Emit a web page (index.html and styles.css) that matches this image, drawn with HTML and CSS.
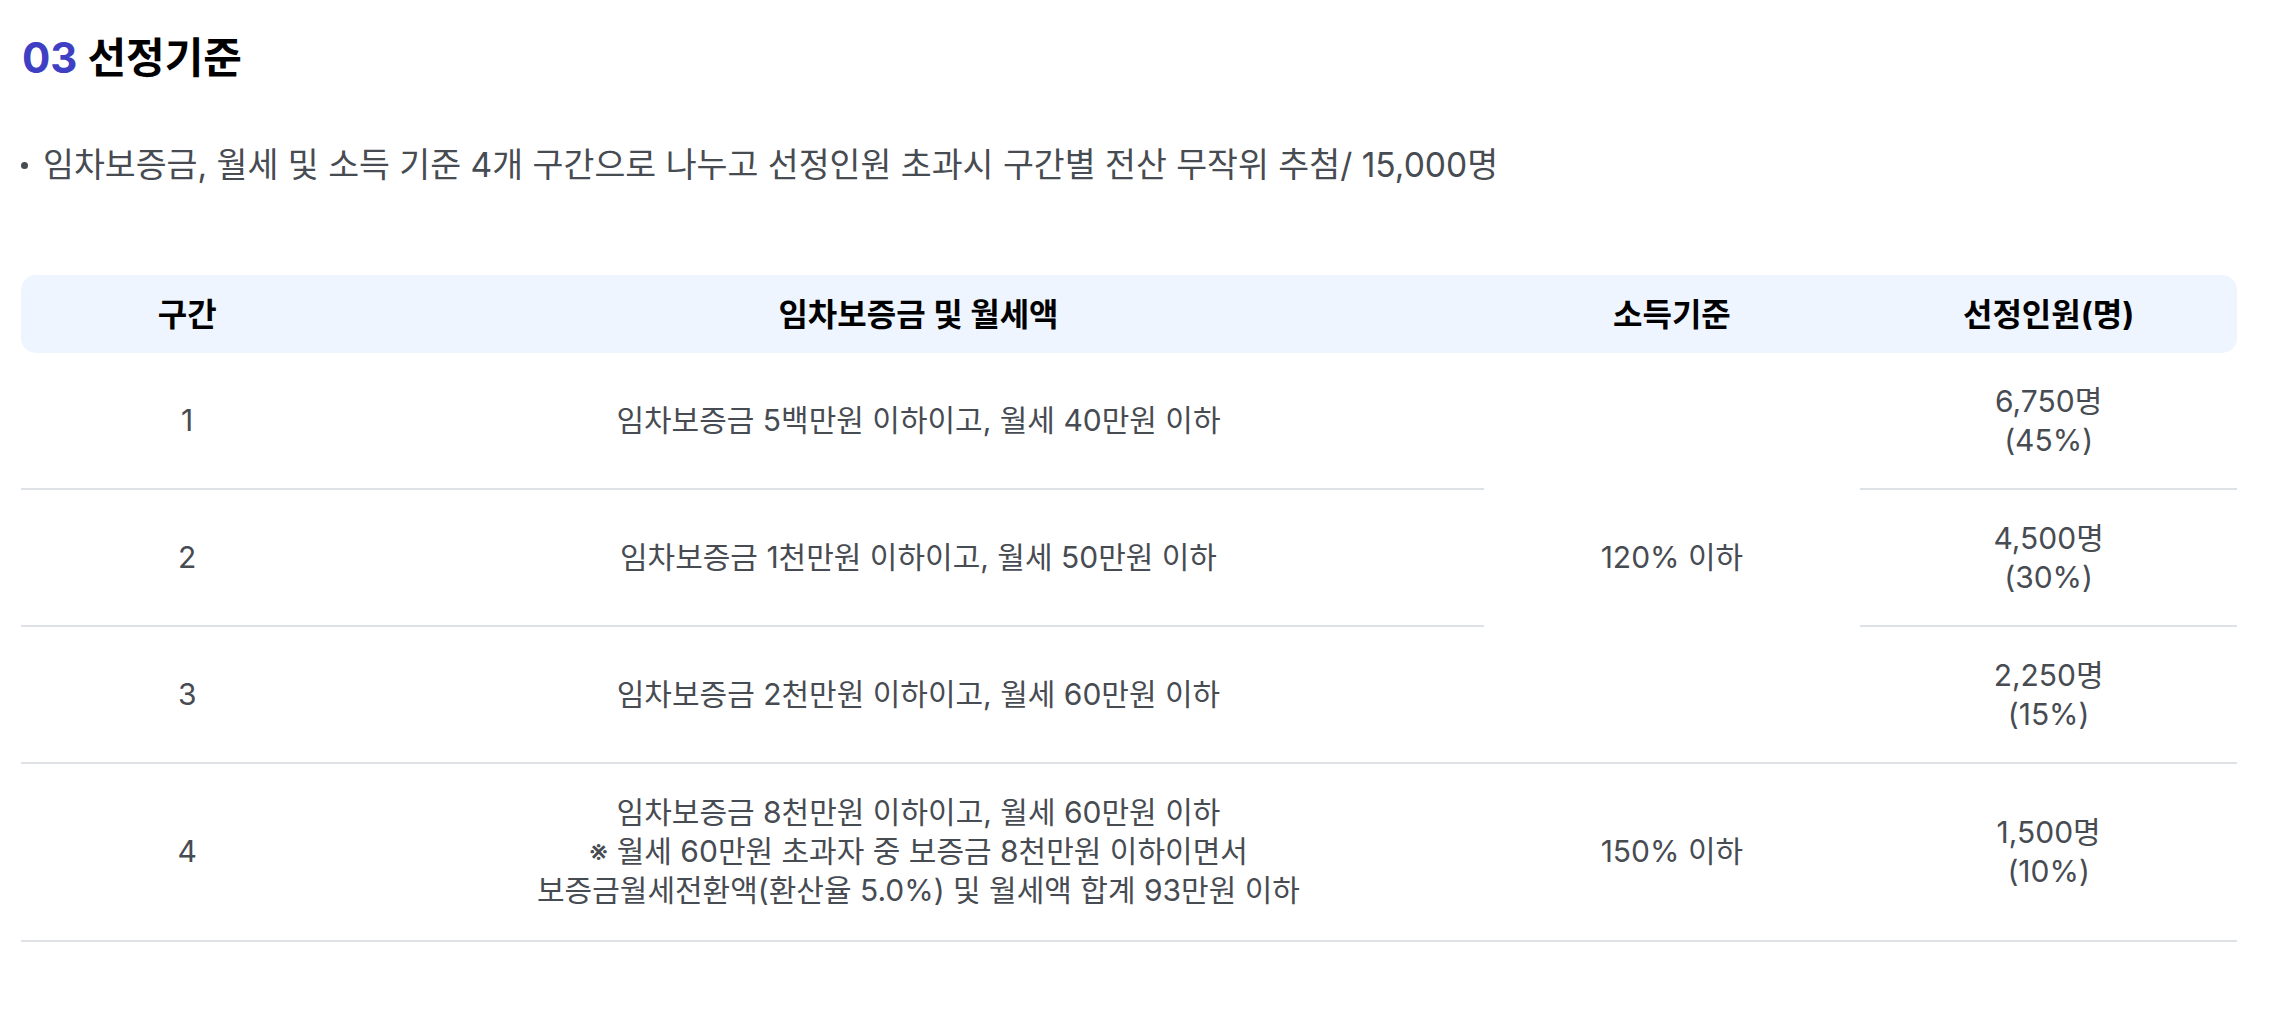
FILE: index.html
```html
<!DOCTYPE html>
<html lang="ko">
<head>
<meta charset="utf-8">
<title>03 선정기준</title>
<link rel="stylesheet" href="styles.css">
</head>
<body>
<section class="section">
  <h2 class="title"><span class="num">03</span> 선정기준</h2>
  <ul class="bullets">
    <li class="bullet">임차보증금, 월세 및 소득 기준 4개 구간으로 나누고 선정인원 초과시 구간별 전산 무작위 추첨/ 15,000명</li>
  </ul>
  <table class="criteria">
    <colgroup>
      <col class="c1"><col class="c2"><col class="c3"><col class="c4">
    </colgroup>
    <thead>
      <tr>
        <th class="first">구간</th>
        <th>임차보증금 및 월세액</th>
        <th>소득기준</th>
        <th class="last">선정인원(명)</th>
      </tr>
    </thead>
    <tbody>
      <tr>
        <td>1</td>
        <td>임차보증금 5백만원 이하이고, 월세 40만원 이하</td>
        <td rowspan="3">120% 이하</td>
        <td>6,750명<br>(45%)</td>
      </tr>
      <tr>
        <td>2</td>
        <td>임차보증금 1천만원 이하이고, 월세 50만원 이하</td>
        <td>4,500명<br>(30%)</td>
      </tr>
      <tr>
        <td>3</td>
        <td>임차보증금 2천만원 이하이고, 월세 60만원 이하</td>
        <td>2,250명<br>(15%)</td>
      </tr>
      <tr>
        <td>4</td>
        <td>임차보증금 8천만원 이하이고, 월세 60만원 이하<br>※ 월세 60만원 초과자 중 보증금 8천만원 이하이면서<br>보증금월세전환액(환산율 5.0%) 및 월세액 합계 93만원 이하</td>
        <td>150% 이하</td>
        <td>1,500명<br>(10%)</td>
      </tr>
    </tbody>
  </table>
</section>
</body>
</html>
```

FILE: styles.css
```css
html, body {
  margin: 0;
  padding: 0;
  background: #ffffff;
}

body {
  font-family: Inter, "Noto Sans CJK KR", sans-serif;
  color: #474b52;
}

.section {
  padding: 30px 41px 0 21px;
}

.title {
  margin: 0;
  font-size: 42px;
  line-height: 56px;
  font-weight: 700;
  color: #000000;
  padding-left: 1px;
}

.title .num {
  color: #3f3fc4;
}

.bullets {
  list-style: none;
  margin: 56px 0 0 0;
  padding: 0;
}

.bullet {
  display: flex;
  align-items: center;
  gap: 15px;
  font-size: 33.6px;
  line-height: 46px;
  color: #474b52;
}

.bullet::before {
  content: "";
  flex: none;
  width: 7px;
  height: 7px;
  border-radius: 50%;
  background: #474b52;
}

.criteria {
  margin-top: 87px;
  width: 100%;
  border-collapse: separate;
  border-spacing: 0;
  table-layout: fixed;
  font-size: 30px;
  line-height: 39px;
}

.c1 { width: 15%; }
.c2 { width: 51%; }
.c3 { width: 17%; }
.c4 { width: 17%; }

.criteria th {
  background: #eef5fe;
  color: #000000;
  font-size: 32px;
  font-weight: 700;
  padding: 19.5px 10px;
  text-align: center;
}

.criteria th.first {
  border-radius: 15px 0 0 15px;
}

.criteria th.last {
  border-radius: 0 15px 15px 0;
}

.criteria td {
  text-align: center;
  vertical-align: middle;
  padding: 28.5px 10px;
  border-bottom: 2px solid #dee1e5;
  color: #474b52;
}

.criteria tbody tr:last-child td {
  padding-top: 29px;
  padding-bottom: 30px;
}
```
